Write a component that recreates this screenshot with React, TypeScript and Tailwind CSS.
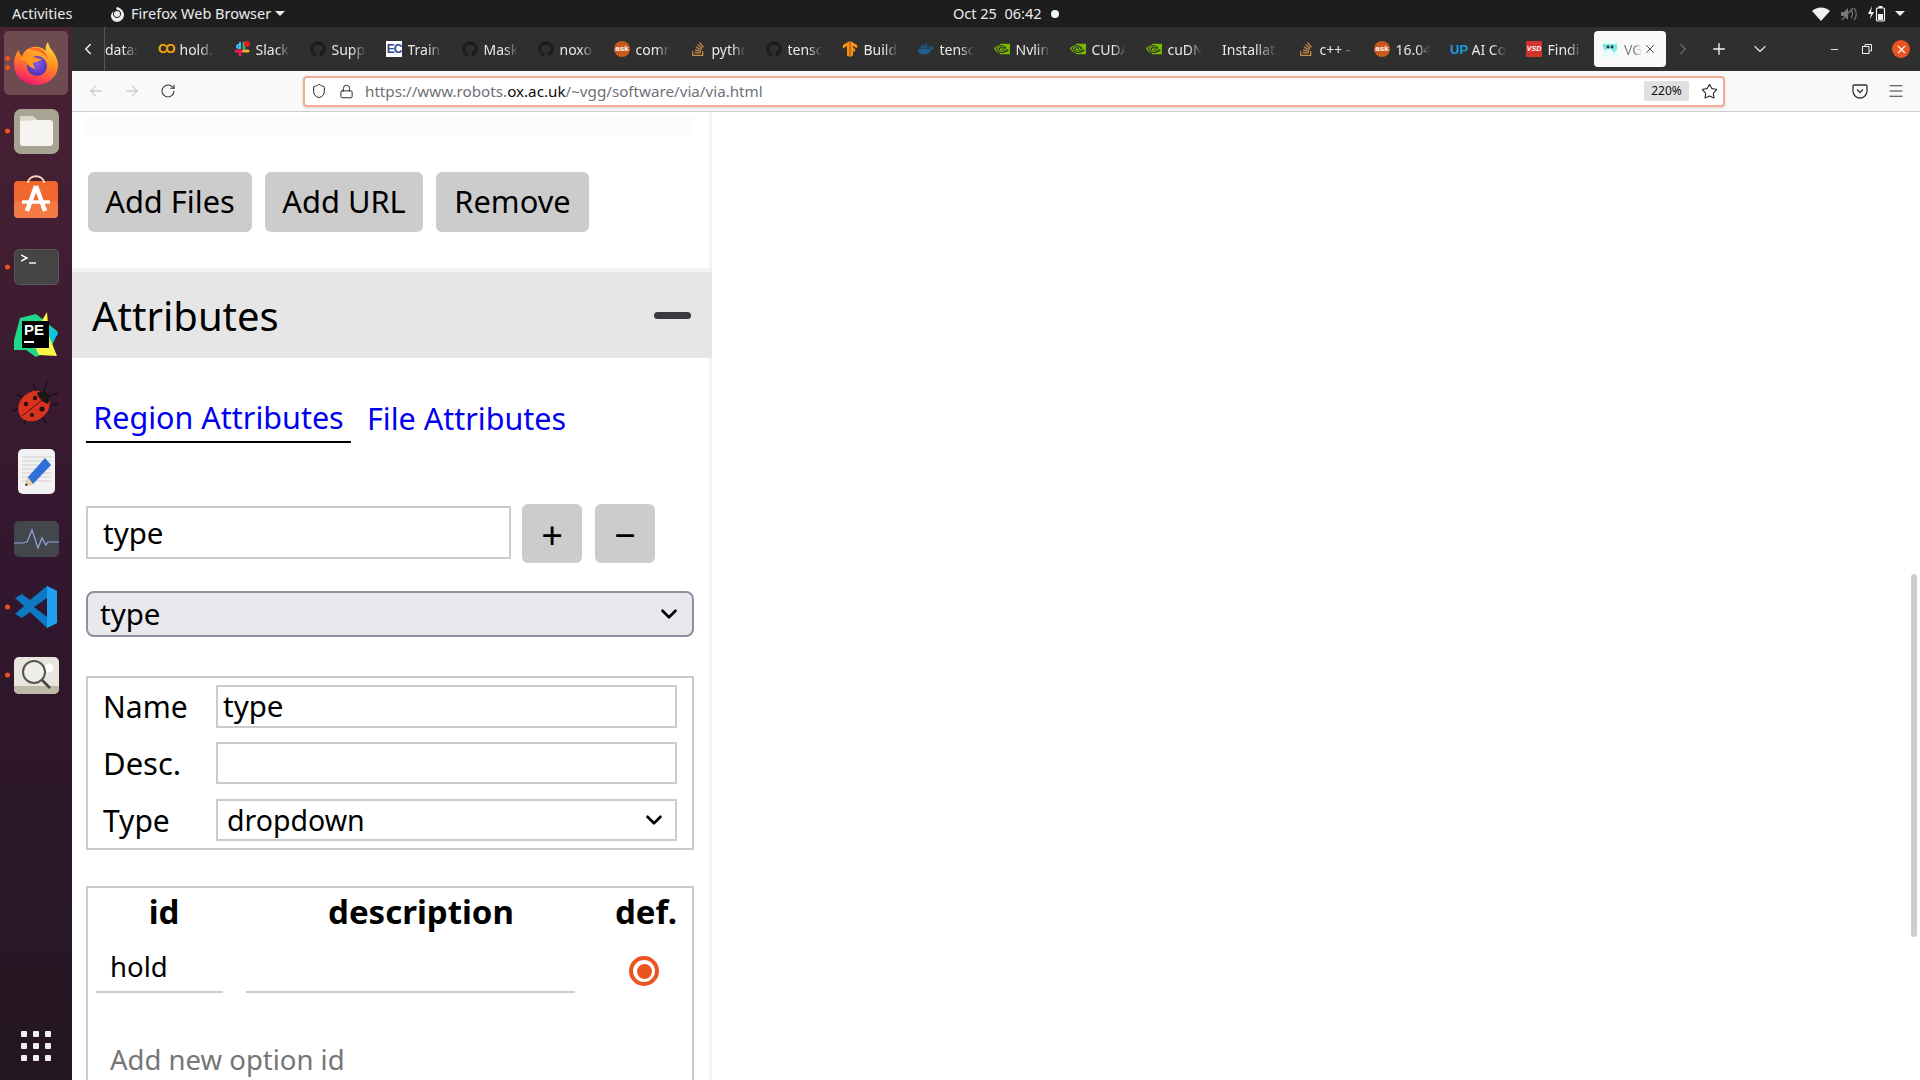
import React from "react";
import { FaGithub, FaStackOverflow, FaDocker } from "react-icons/fa";
import { SiTensorflow, SiNvidia } from "react-icons/si";
import { ChevronLeft, ChevronRight, ChevronDown, Plus, X, ArrowLeft, ArrowRight, RotateCw, Lock, Shield, Star, Menu, Minus } from "lucide-react";

const UI = "font-['Noto_Sans','Open_Sans',sans-serif]";

function Firefox({ size = 46 }: { size?: number }) {
  return (
    <svg width={size} height={size} viewBox="0 0 46 46">
      <defs>
        <linearGradient id="ffa" x1="0.7" y1="0" x2="0.3" y2="1">
          <stop offset="0" stopColor="#ffd43b" />
          <stop offset="0.45" stopColor="#ff8a1f" />
          <stop offset="0.8" stopColor="#ff3d55" />
          <stop offset="1" stopColor="#e5127d" />
        </linearGradient>
        <radialGradient id="ffb" cx="0.5" cy="0.4" r="0.6">
          <stop offset="0" stopColor="#8a5bf0" />
          <stop offset="1" stopColor="#4a2fb0" />
        </radialGradient>
      </defs>
      <path d="M35 2c1 5 3 7 6 11 3 5 4 9 4 12 0 12-10 20-22 20S1 36 1 24c0-6 2-11 5-14 0 3 1 5 3 6 2-5 6-8 11-9 5-1 10 1 13 4-1-3 0-7 2-9z" fill="url(#ffa)" />
      <circle cx="24" cy="26" r="10" fill="url(#ffb)" />
      <path d="M7 19c4-3 10-4 14-2 3 1 5 2 8 2-3 3-7 3-9 4 0 3 2 5 3 6-6-1-10-5-10-9-2 0-4 0-6-1z" fill="#ff9a1f" />
      <path d="M15 9c4-2 9-2 13 0 4 2 6 6 7 10-3-4-7-7-11-8-3-1-6-1-9-2z" fill="#ff6a2b" />
    </svg>
  );
}

function FilesIcon() {
  return (
    <div className="flex h-[45px] w-[45px] items-center justify-center rounded-[7px] bg-[#a8a392]">
      <svg width="33" height="30" viewBox="0 0 33 30">
        <path d="M2 0h11l4 4h13a3 3 0 0 1 3 3v20a3 3 0 0 1-3 3H3a3 3 0 0 1-3-3V2a2 2 0 0 1 2-2z" fill="#f6f5f2" />
        <path d="M0 5V2a2 2 0 0 1 2-2h11l4 4z" fill="#d9d6cc" />
      </svg>
    </div>
  );
}

function SoftwareIcon() {
  return (
    <svg width="46" height="44" viewBox="0 0 46 44" className="-mt-[5px]">
      <rect x="1" y="6" width="44" height="37" rx="4" fill="#f0682e" />
      <rect x="1" y="26" width="44" height="17" rx="4" fill="#f47a44" />
      <path d="M15 8c0-9 16-9 16 0" fill="none" stroke="#f6d5b8" strokeWidth="2" />
      <path d="M23 11l-9 25M23 11l9 25" stroke="#fff" strokeWidth="4.5" fill="none" />
      <path d="M9 27h28" stroke="#fff" strokeWidth="3.5" />
    </svg>
  );
}

function TerminalIcon() {
  return (
    <div className="flex h-[36px] w-[45px] flex-col rounded-[5px] border border-[#5a5a5a] bg-[#444444] px-[6px] pt-[4px]">
      <svg width="20" height="12" viewBox="0 0 20 12">
        <path d="M0 1l6 3-6 3" stroke="#fff" strokeWidth="1.4" fill="none" />
        <path d="M8 9h7" stroke="#fff" strokeWidth="1.4" />
      </svg>
    </div>
  );
}

function PyCharm() {
  return (
    <div className="relative h-[46px] w-[46px]">
      <svg width="46" height="46" viewBox="0 0 46 46" className="absolute inset-0">
        <path d="M1 28 7 6l16-4 10 8 12 10-8 18-14 7-10-7-12 0z" fill="#21d789" />
        <path d="M34 0l2 24 8 20-18-1-8-16z" fill="#fcf84a" />
        <path d="M36 14l9 8-7 9z" fill="#07c3f2" />
      </svg>
      <div className="absolute left-[9px] top-[9px] flex h-[27px] w-[27px] flex-col bg-black px-[2px] pt-[1px] font-['Liberation_Sans',sans-serif] text-[15px] font-bold leading-[15px] text-white">
        PE
        <div className="mt-[4px] h-[2px] w-[10px] bg-white" />
      </div>
    </div>
  );
}

function Ladybug() {
  return (
    <svg width="46" height="46" viewBox="0 0 46 46">
      <g stroke="#17121a" strokeWidth="1.5" fill="none">
        <path d="M31 12l3-11M24 11 20 4M36 16l9-3M10 17 3 15M36 26l8-2 1 1M6 28l-6 3M28 36l5 7M14 38l-3 6" />
      </g>
      <ellipse cx="21" cy="26" rx="17" ry="14" transform="rotate(-40 21 26)" fill="#d8331f" />
      <path d="M24 13c4-3 9-2 11 1 2 3 2 7 0 10-4-1-10-6-11-11z" fill="#181818" />
      <path d="M33 17 9 36" stroke="#5a1410" strokeWidth="1" />
      <circle cx="22" cy="18" r="2.2" fill="#2a0f0f" />
      <circle cx="13" cy="24" r="2.2" fill="#2a0f0f" />
      <circle cx="29" cy="29" r="2.6" fill="#2a0f0f" />
      <circle cx="19" cy="35" r="2" fill="#2a0f0f" />
    </svg>
  );
}

function EditorIcon() {
  return (
    <div className="relative h-[45px] w-[37px] rounded-[5px] bg-[#f2f2f2]">
      <svg width="37" height="45" viewBox="0 0 37 45" className="absolute inset-0">
        <path d="M4 8h29M4 12h29M4 16h29M4 20h29M4 24h29M4 28h29M4 32h29" stroke="#cfcfcf" strokeWidth="1" />
        <path d="M27 9l6 7-18 19-8 2 3-9z" fill="#2f6fd8" />
        <path d="M10 28l5 7-8 2z" fill="#f0cfa4" />
        <path d="M7 37l1-3 2 2z" fill="#333" />
      </svg>
    </div>
  );
}

function MonitorIcon() {
  return (
    <div className="flex h-[36px] w-[45px] items-center rounded-[5px] bg-[#43464a]">
      <svg width="45" height="36" viewBox="0 0 45 36">
        <path d="M0 22h8l5-1 5-12 6 18 4-10 4 7 2-3h11" fill="none" stroke="#8fa8e0" strokeWidth="1.2" />
      </svg>
    </div>
  );
}

function VSCode() {
  return (
    <svg width="42" height="42" viewBox="0 0 42 42">
      <path d="M32 0 42 5v32l-10 5-17-16-8 6-7-4 9-8-9-8 7-4 8 6z" fill="#0e78c2" />
      <path d="M32 0 42 5v32l-10 5z" fill="#21a0f0" />
      <path d="M32 12 19 21l13 10z" fill="#2f1730" />
    </svg>
  );
}

function MagnifierIcon() {
  return (
    <div className="relative h-[37px] w-[45px] overflow-hidden rounded-[5px] bg-[#e8e6df]">
      <div className="absolute bottom-0 left-0 right-0 h-[8px] bg-[#bdb9a7]" />
      <svg width="45" height="37" viewBox="0 0 45 37" className="absolute inset-0">
        <circle cx="35" cy="11" r="4.5" fill="#fff" />
        <circle cx="20" cy="15" r="11" fill="#efeee9" stroke="#555" strokeWidth="2" />
        <path d="M28 23l8 8" stroke="#444" strokeWidth="2.6" />
      </svg>
    </div>
  );
}

const dock: { node: React.ReactNode; dots: number; active?: boolean }[] = [
  { node: <Firefox />, dots: 2, active: true },
  { node: <FilesIcon />, dots: 1 },
  { node: <SoftwareIcon />, dots: 0 },
  { node: <TerminalIcon />, dots: 1 },
  { node: <PyCharm />, dots: 0 },
  { node: <Ladybug />, dots: 0 },
  { node: <EditorIcon />, dots: 0 },
  { node: <MonitorIcon />, dots: 0 },
  { node: <VSCode />, dots: 1 },
  { node: <MagnifierIcon />, dots: 1 },
];

function Dock() {
  return (
    <div className="flex w-[72px] shrink-0 flex-col items-stretch bg-gradient-to-b from-[#4a2233] via-[#33172f] to-[#241721] pt-[2px]">
      {dock.map((d, i) => (
        <div key={i} className="relative flex h-[68px] items-center justify-center">
          {d.active && <div className="absolute left-[4px] right-[4px] top-[2px] bottom-[2px] rounded-[5px] bg-[#6d4b50]" />}
          {d.dots > 0 && (
            <div className="absolute left-[5px] top-1/2 flex -translate-y-1/2 flex-col gap-[4px]">
              {Array.from({ length: d.dots }).map((_, j) => (
                <div key={j} className="h-[5px] w-[5px] rounded-full bg-[#e95420]" />
              ))}
            </div>
          )}
          <div className="relative">{d.node}</div>
        </div>
      ))}
      <div className="mt-auto mb-[19px] grid w-fit grid-cols-3 gap-[6px] self-center">
        {Array.from({ length: 9 }).map((_, i) => (
          <div key={i} className="h-[6px] w-[6px] rounded-[1px] bg-[#f0f0f0]" />
        ))}
      </div>
    </div>
  );
}

function TopBar() {
  return (
    <div className={`flex h-[27px] shrink-0 items-center bg-[#1d1d1d] text-[14.5px] text-[#ececec] ${UI}`}>
      <span className="ml-[12px] w-[97px]">Activities</span>
      <svg width="16" height="16" viewBox="0 0 16 16" className="mr-[6px]">
        <path d="M8 1c-1 1-1 2 0 3 3 0 4 2 4 4s-2 4-4 4-4-2-4-4c0-1 0-2 1-3-2 1-3 3-3 5 0 3 3 6 6 6s7-3 7-7-3-7-7-8z" fill="#ececec" />
        <circle cx="8" cy="8" r="3" fill="#ececec" />
      </svg>
      <span className="w-[139px] whitespace-nowrap">Firefox Web Browser</span>
      <span className="ml-[5px] h-0 w-0 border-x-[5px] border-t-[5px] border-x-transparent border-t-[#ececec]" />
      <span className="ml-[668px] w-[92px] whitespace-nowrap">Oct 25&nbsp;&nbsp;06:42</span>
      <span className="ml-[6px] h-[8px] w-[8px] rounded-full bg-[#f5f5f5]" />
      <div className="ml-auto mr-[15px] flex items-center">
        <svg width="18" height="14" viewBox="0 0 18 14"><path d="M0 4a13 13 0 0 1 18 0l-9 10z" fill="#f2f2f2" /></svg>
        <svg width="16" height="14" viewBox="0 0 16 14" className="ml-[11px]">
          <path d="M0 5h3l4-4v12l-4-4H0z" fill="#777" />
          <path d="M10 3c2 2 2 6 0 8M13 1c3 3 3 9 0 12M1 13 12 1" stroke="#777" strokeWidth="1.2" fill="none" />
        </svg>
        <svg width="18" height="16" viewBox="0 0 18 16" className="ml-[11px]">
          <path d="M4 0 0 8h3l-1 5 4-7H3z" fill="#f2f2f2" />
          <rect x="8.5" y="2" width="8" height="13" rx="1" fill="none" stroke="#f2f2f2" strokeWidth="1.2" />
          <rect x="10.5" y="0" width="4" height="2" fill="#f2f2f2" />
          <rect x="10" y="8" width="5" height="6" fill="#f2f2f2" />
        </svg>
        <span className="ml-[9px] h-0 w-0 border-x-[5px] border-t-[5px] border-x-transparent border-t-[#ececec]" />
      </div>
    </div>
  );
}

const Gh = () => <FaGithub size={16} color="#1a1d20" />;
const Nv = () => <SiNvidia size={16} color="#76b900" />;
const So = () => <FaStackOverflow size={16} color="#c58a45" />;
const Ask = () => (
  <div className="flex h-[16px] w-[16px] items-center justify-center rounded-full bg-[#c9581d] font-['Liberation_Sans',sans-serif] text-[8px] font-bold leading-none text-white">ask</div>
);

const tabs: { icon: React.ReactNode; text: string }[] = [
  { icon: <div className="font-['Liberation_Sans',sans-serif] text-[13px] font-bold tracking-[-2px] text-[#f9ab00]">CO</div>, text: "hold." },
  {
    icon: (
      <svg width="16" height="16" viewBox="0 0 16 16">
        <path d="M6 1v6H4.5A1.5 1.5 0 1 1 6 5.5" fill="none" stroke="#36c5f0" strokeWidth="2" />
        <path d="M10 2v5" stroke="#2eb67d" strokeWidth="3" strokeLinecap="round" />
        <path d="M9 10h5" stroke="#ecb22e" strokeWidth="3" strokeLinecap="round" />
        <path d="M2 10h5M6 10v4" stroke="#e01e5a" strokeWidth="3" strokeLinecap="round" />
        <circle cx="13" cy="3" r="3" fill="#e01e1e" />
      </svg>
    ),
    text: "Slack",
  },
  { icon: <Gh />, text: "Supp" },
  { icon: <div className="flex h-[16px] w-[16px] items-center justify-center bg-white font-['Liberation_Sans',sans-serif] text-[12px] font-bold tracking-[-1px] text-[#2b4a93]">EC</div>, text: "Train" },
  { icon: <Gh />, text: "Mask" },
  { icon: <Gh />, text: "noxo" },
  { icon: <Ask />, text: "comm" },
  { icon: <So />, text: "pytho" },
  { icon: <Gh />, text: "tenso" },
  { icon: <SiTensorflow size={16} color="#ff8f10" />, text: "Build" },
  { icon: <FaDocker size={16} color="#1f5d8c" />, text: "tenso" },
  { icon: <Nv />, text: "Nvlin" },
  { icon: <Nv />, text: "CUDA" },
  { icon: <Nv />, text: "cuDN" },
  { icon: null, text: "Installat" },
  { icon: <So />, text: "c++ -" },
  { icon: <Ask />, text: "16.04" },
  { icon: <div className="font-['Liberation_Sans',sans-serif] text-[13px] font-bold leading-none text-[#1b9bd8]">UP</div>, text: "AI Co" },
  { icon: <div className="flex h-[16px] w-[16px] items-center justify-center rounded-[1px] bg-[#d0342c] font-['Liberation_Sans',sans-serif] text-[7px] font-bold italic text-white">VSD</div>, text: "Findi" },
];

function TabBar() {
  return (
    <div className={`flex h-[44px] shrink-0 items-center bg-[#2f2f2f] text-[14px] text-[#e8e8e8] ${UI}`}>
      <ChevronLeft size={18} className="ml-[7px] w-[18px] text-[#f0f0f0]" />
      <div className="ml-[7px] flex h-full w-[46px] items-center border-l border-[#555]">
        <span className="w-[33px] overflow-hidden whitespace-nowrap [mask-image:linear-gradient(to_right,black_55%,transparent)]">datas</span>
      </div>
      {tabs.map((t, i) => (
        <div key={i} className="flex h-full w-[76px] shrink-0 items-center pl-[8px]">
          {t.icon && <div className="flex w-[21.5px] shrink-0 items-center">{t.icon}</div>}
          <span className={`overflow-hidden whitespace-nowrap [mask-image:linear-gradient(to_right,black_60%,transparent)] ${t.icon ? "w-[34px]" : "w-[56px]"}`}>{t.text}</span>
        </div>
      ))}
      <div className="flex h-[36px] w-[72px] shrink-0 items-center rounded-[4px] bg-[#f9f9fa] pl-[8px] text-[#808080]">
        <svg width="16" height="16" viewBox="0 0 16 16" className="mr-[6px] shrink-0">
          <rect width="16" height="16" fill="#e8fbfb" />
          <path d="M1 3h14v5l-3 4-3-4H5l-2 2-2-4z" fill="#7fe6e0" />
          <circle cx="6" cy="6" r="1.4" fill="#234" />
          <circle cx="10" cy="6" r="1.4" fill="#234" />
        </svg>
        <span className="w-[18px] overflow-hidden whitespace-nowrap [mask-image:linear-gradient(to_right,black_60%,transparent)]">VGG</span>
        <X size={14} strokeWidth={1.5} className="ml-[1px] text-[#333]" />
      </div>
      <ChevronRight size={18} className="ml-[8px] text-[#666]" />
      <Plus size={18} strokeWidth={1.8} className="ml-[18px] text-[#f5f5f5]" />
      <ChevronDown size={20} strokeWidth={1.4} className="ml-[22px] text-[#e5e5e5]" />
      <Minus size={11} className="ml-[59px] text-[#f0f0f0]" />
      <svg width="10" height="10" viewBox="0 0 10 10" className="ml-[22px]">
        <rect x="0.5" y="2.5" width="6.5" height="7" fill="none" stroke="#f0f0f0" />
        <path d="M3 2V0.5h6.5V7H7.5" fill="none" stroke="#f0f0f0" />
      </svg>
      <div className="ml-[20px] flex h-[18px] w-[18px] items-center justify-center rounded-full bg-[#e95420]">
        <X size={13} strokeWidth={2} className="text-white" />
      </div>
    </div>
  );
}

function NavBar() {
  return (
    <div className={`flex h-[41px] shrink-0 items-center border-b border-[#cccccc] bg-[#f9f9fa] ${UI}`}>
      <ArrowLeft size={18} strokeWidth={1.2} className="ml-[15px] text-[#b0b0b2]" />
      <ArrowRight size={18} strokeWidth={1.2} className="ml-[18px] text-[#b0b0b2]" />
      <RotateCw size={16} strokeWidth={1.6} className="ml-[19px] text-[#3a3a3c]" />
      <div className="ml-[127px] flex h-[31px] w-[1422px] items-center rounded-[4px] border-2 border-[#f5ab94] bg-white shadow-[0_1px_3px_rgba(0,0,0,0.15)]">
        <Shield size={16} strokeWidth={1.5} className="ml-[6px] text-[#222]" />
        <Lock size={15} strokeWidth={1.5} className="ml-[12px] text-[#222]" />
        <span className="ml-[11px] whitespace-nowrap text-[15.2px] text-[#6f6f76]">
          https://www.robots.<span className="text-[#0c0c0d]">ox.ac.uk</span>/~vgg/software/via/via.html
        </span>
        <span className="ml-auto flex h-[20px] w-[45px] items-center justify-center rounded-[2px] bg-[#e0e0e1] text-[12px] text-[#111]">220%</span>
        <Star size={17} strokeWidth={1.5} className="ml-[12px] mr-[5px] text-[#222]" />
      </div>
      <svg width="16" height="16" viewBox="0 0 16 16" className="ml-[127px]">
        <path d="M2 2h12a1 1 0 0 1 1 1v5a7 7 0 0 1-14 0V3a1 1 0 0 1 1-1z" fill="none" stroke="#333" strokeWidth="1.3" />
        <path d="M5 6.5l3 3 3-3" fill="none" stroke="#333" strokeWidth="1.3" />
      </svg>
      <Menu size={18} strokeWidth={1.3} className="ml-[19px] text-[#333]" />
    </div>
  );
}

const btn = "flex items-center justify-center rounded-[6px] bg-[#cccccc] text-black";
const field = "border-2 border-[#cccccc] bg-white text-black outline-none";

function Panel() {
  return (
    <div className={`flex w-[640px] shrink-0 flex-col border-r-[3px] border-[#f3f3f3] bg-white text-[30.5px] text-black ${UI}`}>
      <div className="ml-[14px] mt-[5px] h-[18px] w-[608px] shrink-0 bg-[#fcfcfc]" />
      <div className="ml-[16px] mt-[37px] flex shrink-0 gap-[13px] text-[30.8px]">
        <div className={`${btn} h-[60px] w-[164px] pb-[2px]`}>Add Files</div>
        <div className={`${btn} h-[60px] w-[158px] pb-[2px]`}>Add URL</div>
        <div className={`${btn} h-[60px] w-[153px] pb-[2px]`}>Remove</div>
      </div>
      <div className="mt-[36px] flex h-[90px] w-[640px] shrink-0 items-center justify-between border-t-4 border-[#f3f3f3] bg-[#e6e6e6] pl-[20px] pr-[21px]">
        <span className="pt-[1px] text-[40px] leading-none">Attributes</span>
        <span className="h-[7px] w-[37px] rounded-full bg-[#3a3b40]" />
      </div>
      <div className="ml-[14px] mt-[47px] flex shrink-0 items-start gap-[16px] text-[#0000ee]">
        <div className="flex h-[38px] w-[265px] items-center justify-center border-b-2 border-black pb-[11px]">Region Attributes</div>
        <div className="flex h-[38px] items-center pb-[11px]">File Attributes</div>
      </div>
      <div className="ml-[14px] mt-[59px] flex shrink-0 items-center gap-[11px]">
        <input readOnly value="type" className={`${field} h-[53px] w-[425px] pl-[15px] text-[29.5px]`} />
        <div className={`${btn} mt-[2px] h-[59px] w-[60px] text-[38px] leading-none`}>+</div>
        <div className={`${btn} ml-[2px] mt-[2px] h-[59px] w-[60px] text-[38px] leading-none`}>−</div>
      </div>
      <div className="relative ml-[14px] mt-[28px] flex h-[46px] w-[608px] shrink-0 items-center rounded-[8px] border-2 border-[#8f8f9d] bg-[#e9e9ed] pl-[12px] text-[29.5px]">
        type
        <ChevronDown size={26} strokeWidth={2.4} className="absolute right-[10px] text-black" />
      </div>
      <div className="ml-[14px] mt-[39px] flex h-[174px] w-[608px] shrink-0 flex-col border-2 border-[#cccccc] pl-[15px] pt-[7px]">
        <div className="flex h-[43px] items-center">
          <span className="w-[113px] text-[30px]">Name</span>
          <input readOnly value="type" className={`${field} h-[43px] w-[461px] pl-[5px] text-[29.5px]`} />
        </div>
        <div className="mt-[14px] flex h-[42px] items-center">
          <span className="w-[113px] text-[31px]">Desc.</span>
          <div className={`${field} h-[42px] w-[461px]`} />
        </div>
        <div className="mt-[15px] flex h-[42px] items-center">
          <span className="w-[113px] text-[30px]">Type</span>
          <div className={`${field} relative flex h-[42px] w-[461px] items-center pl-[9px] text-[28.5px]`}>
            dropdown
            <ChevronDown size={26} strokeWidth={2.4} className="absolute right-[8px] text-black" />
          </div>
        </div>
      </div>
      <div className="ml-[14px] mt-[36px] flex h-[300px] w-[608px] shrink-0 flex-col border-2 border-[#cccccc]">
        <div className="flex h-[48px] items-center text-[33px] font-bold">
          <span className="w-[152px] text-center">id</span>
          <span className="w-[362px] text-center">description</span>
          <span className="w-[88px] text-center">def.</span>
        </div>
        <div className="flex h-[57px] items-start text-[27.5px]">
          <div className="ml-[8px] flex h-[57px] w-[127px] items-center border-b-2 border-[#cccccc] pl-[14px] pt-[7px]">hold</div>
          <div className="ml-[23px] h-[57px] w-[329px] border-b-2 border-[#cccccc]" />
          <div className="ml-[54px] mt-[20px] flex h-[30px] w-[30px] items-center justify-center rounded-full border-[4px] border-[#e95420] bg-white">
            <div className="h-[15px] w-[15px] rounded-full bg-[#e95420]" />
          </div>
        </div>
        <div className="mt-[46px] pl-[22px] text-[27.5px] text-[#757575]">Add new option id</div>
      </div>
    </div>
  );
}

export default function App() {
  return (
    <div className="flex h-[1080px] w-[1920px] flex-col overflow-hidden bg-white">
      <TopBar />
      <div className="flex min-h-0 flex-1">
        <Dock />
        <div className="flex min-w-0 flex-1 flex-col">
          <TabBar />
          <NavBar />
          <div className="relative flex min-h-0 flex-1 bg-white">
            <Panel />
            <div className="absolute right-[3px] top-[462px] h-[363px] w-[6px] rounded-full bg-[#cdcdcd]" />
          </div>
        </div>
      </div>
    </div>
  );
}
